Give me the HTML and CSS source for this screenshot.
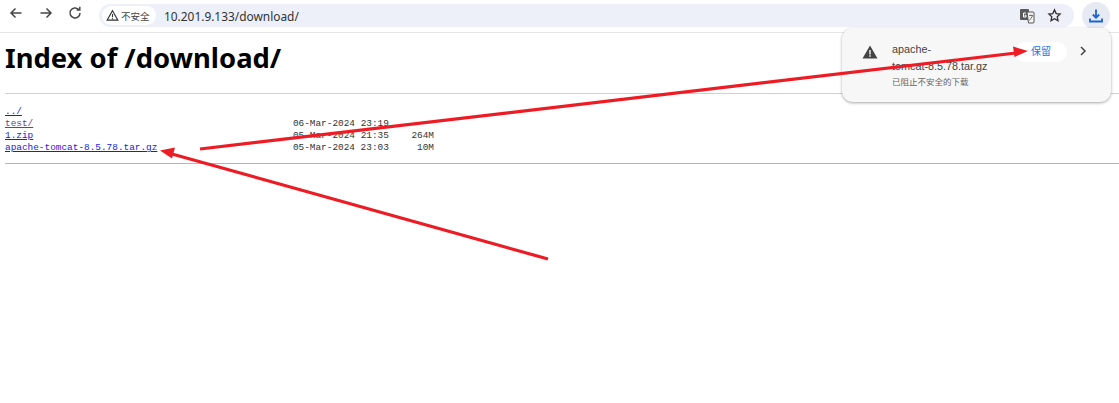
FILE: index.html
```html
<!DOCTYPE html>
<html lang="zh">
<head>
<meta charset="utf-8">
<title>Index of /download/</title>
<link rel="stylesheet" href="styles.css">
</head>
<body>
<header class="toolbar">
  <nav class="nav-buttons">
    <svg class="icon" viewBox="0 0 16 16"><path d="M13.5 8H3M7.5 3.5 3 8l4.500 4.500"/></svg>
    <svg class="icon" viewBox="0 0 16 16"><path d="M2.500 8H13M8.500 3.500 13 8l-4.500 4.500"/></svg>
    <svg class="icon" viewBox="0 0 16 16"><path d="M13 8a5 5 0 1 1-1.500-3.600M12.800 1.800v3.200H9.600"/></svg>
  </nav>
  <div class="omnibox">
    <div class="chip">
      <svg class="warn-outline" viewBox="0 0 14 14"><path d="M7 1.800 12.800 12H1.200ZM7 5.500v3.500M7 10v1"/></svg>
      <span class="chip-text">不安全</span>
    </div>
    <span class="url">10.201.9.133/download/</span>
    <div class="omni-actions">
      <svg class="translate" viewBox="0 0 16 16"><rect class="tr-back" x="1" y="1" width="9" height="11" rx="1"/><path class="tr-front" d="M8 4h6a1 1 0 0 1 1 1v9a1 1 0 0 1-1 1H9.500Z"/><path class="tr-g" d="M7 5H4.500v4H7V7.200H5.500"/><path class="tr-mark" d="M10 7.500h4M12 6.500v1M10.500 12.500l3-4.500"/></svg>
      <svg class="star" viewBox="0 0 16 16"><path d="M8 2l1.800 3.900 4.200.5-3.100 2.900.8 4.200L8 11.400l-3.700 2.100.8-4.200L2 6.400l4.200-.5Z"/></svg>
    </div>
  </div>
  <div class="download-btn">
    <svg viewBox="0 0 16 16"><path d="M8 1.500v8M4.800 6.500 8 9.700l3.200-3.200M2 10.500v3h12v-3"/></svg>
  </div>
</header>
<main class="page">
  <h1>Index of /download/</h1>
  <hr class="rule-top">
  <pre class="listing"><a href="#">../</a>
<a class="visited" href="#">test/</a>                                              06-Mar-2024 23:19
<a href="#">1.zip</a>                                              05-Mar-2024 21:35    264M
<a href="#">apache-tomcat-8.5.78.tar.gz</a>                        05-Mar-2024 23:03     10M</pre>
  <hr class="rule-bottom">
</main>
<aside class="popup">
  <svg class="popup-warn" viewBox="0 0 16 16"><path fill-rule="evenodd" d="M8 1.500 15.500 14.500H.5ZM7.300 6v4.500h1.400V6ZM7.300 11.300v1.400h1.400v-1.400Z"/></svg>
  <div class="popup-text">
    <div class="file-name">apache-<br>tomcat-8.5.78.tar.gz</div>
    <div class="file-note">已阻止不安全的下载</div>
  </div>
  <span class="keep">保留</span>
  <svg class="chevron" viewBox="0 0 10 10"><path d="M3 1l4 4-4 4"/></svg>
</aside>
<svg class="arrows" viewBox="0 0 1119 403">
  <path class="arrow-line" d="M200 149 1016 53"/>
  <path class="arrow-head" d="M1028 51 1013 46.500 1014.500 57Z"/>
  <path class="arrow-line" d="M548 259 172 154"/>
  <path class="arrow-head" d="M160 150.500 175 147.500 172 158.500Z"/>
</svg>
</body>
</html>
```
FILE: styles.css
```css
* { box-sizing: border-box; }
html, body { margin: 0; padding: 0; }
body {
  width: 1119px;
  height: 403px;
  overflow: hidden;
  background: #fff;
  color: #000;
  position: relative;
  font-family: "Liberation Sans", "Noto Sans CJK SC", sans-serif;
}
.toolbar {
  height: 33px;
  display: flex;
  align-items: flex-start;
  border-bottom: 1px solid #e6e6e6;
  padding: 4px 0 0 8px;
}
.nav-buttons { display: flex; gap: 13.500px; padding-top: 1px; width: 91px; }
.icon { width: 16px; height: 16px; fill: none; stroke: #474747; stroke-width: 1.500; }
.omnibox {
  width: 975px;
  height: 23px;
  margin-top: 0;
  background: #edf0f8;
  border-radius: 12px;
  display: flex;
  align-items: center;
  padding-left: 3px;
}
.chip {
  height: 19px;
  width: 54px;
  background: #fff;
  border-radius: 10px;
  display: flex;
  align-items: center;
  gap: 2px;
  padding-left: 4px;
}
.warn-outline { width: 13px; height: 13px; fill: none; stroke: #333; stroke-width: 1.200; }
.chip-text { font-size: 9.500px; color: #444; white-space: nowrap; }
.url {
  margin-left: 8px;
  font-size: 11.900px;
  color: #333;
  font-family: "Noto Sans", "Liberation Sans", sans-serif;
  white-space: nowrap;
}
.omni-actions { margin-left: auto; display: flex; align-items: center; gap: 12px; padding-right: 12px; }
.translate { width: 16px; height: 16px; }
.tr-back { fill: #5a5a5a; }
.tr-front { fill: #f4f4f4; stroke: #555; stroke-width: 1; }
.tr-g { fill: none; stroke: #fff; stroke-width: 1; }
.tr-mark { fill: none; stroke: #666; stroke-width: 0.900; }
.star { width: 15px; height: 15px; fill: none; stroke: #333; stroke-width: 1.400; }
.download-btn {
  width: 28px;
  height: 28px;
  margin: -2px 0 0 8px;
  border-radius: 50%;
  background: #e7eaf2;
  display: flex;
  align-items: center;
  justify-content: center;
}
.download-btn svg { width: 16px; height: 16px; fill: none; stroke: #1a63d3; stroke-width: 1.800; }
.page { padding: 0 0 0 5px; }
h1 {
  margin: 0;
  padding-top: 8px;
  height: 60px;
  font-size: 27.400px;
  line-height: 34px;
  font-weight: 700;
  font-family: "Noto Sans", "Liberation Sans", sans-serif;
}
hr { border: 0; margin: 0; background: #b4b4b4; }
.rule-top { height: 1px; background: #d0d0d0; }
.listing {
  margin: 12px 0 0;
  font-family: "Liberation Mono", monospace;
  font-size: 9.420px;
  line-height: 12px;
  color: #333;
  height: 48px;
}
.listing a { color: #1a1ae6; text-decoration: underline; }
.listing a.visited { color: #6a3d9a; }
.rule-bottom { height: 1px; margin-top: 9px; }
.popup {
  position: absolute;
  left: 842px;
  top: 28px;
  width: 269px;
  height: 74px;
  background: #f7f7f7;
  border-radius: 11px;
  box-shadow: 0 1px 3px rgba(0, 0, 0, 0.35);
  display: flex;
  align-items: flex-start;
}
.popup-warn { position: absolute; left: 20px; top: 16px; width: 16px; height: 16px; fill: #444; }
.popup-text { position: absolute; left: 50px; top: 13px; }
.file-name { font-size: 10.800px; line-height: 17px; color: #444; white-space: nowrap; }
.file-note { font-size: 8.500px; line-height: 12px; color: #666; margin-top: 1px; white-space: nowrap; }
.keep {
  position: absolute;
  left: 173px;
  top: 14px;
  width: 52px;
  height: 20px;
  background: #fff;
  border-radius: 10px;
  color: #1a73e8;
  font-size: 10px;
  line-height: 20px;
  text-align: center;
}
.chevron { position: absolute; left: 236px; top: 18px; width: 10px; height: 10px; fill: none; stroke: #444; stroke-width: 1.500; }
.arrows { position: absolute; left: 0; top: 0; width: 1119px; height: 403px; pointer-events: none; }
.arrow-line { stroke: #ed1c24; stroke-width: 3.200; fill: none; }
.arrow-head { fill: #ed1c24; }
```
